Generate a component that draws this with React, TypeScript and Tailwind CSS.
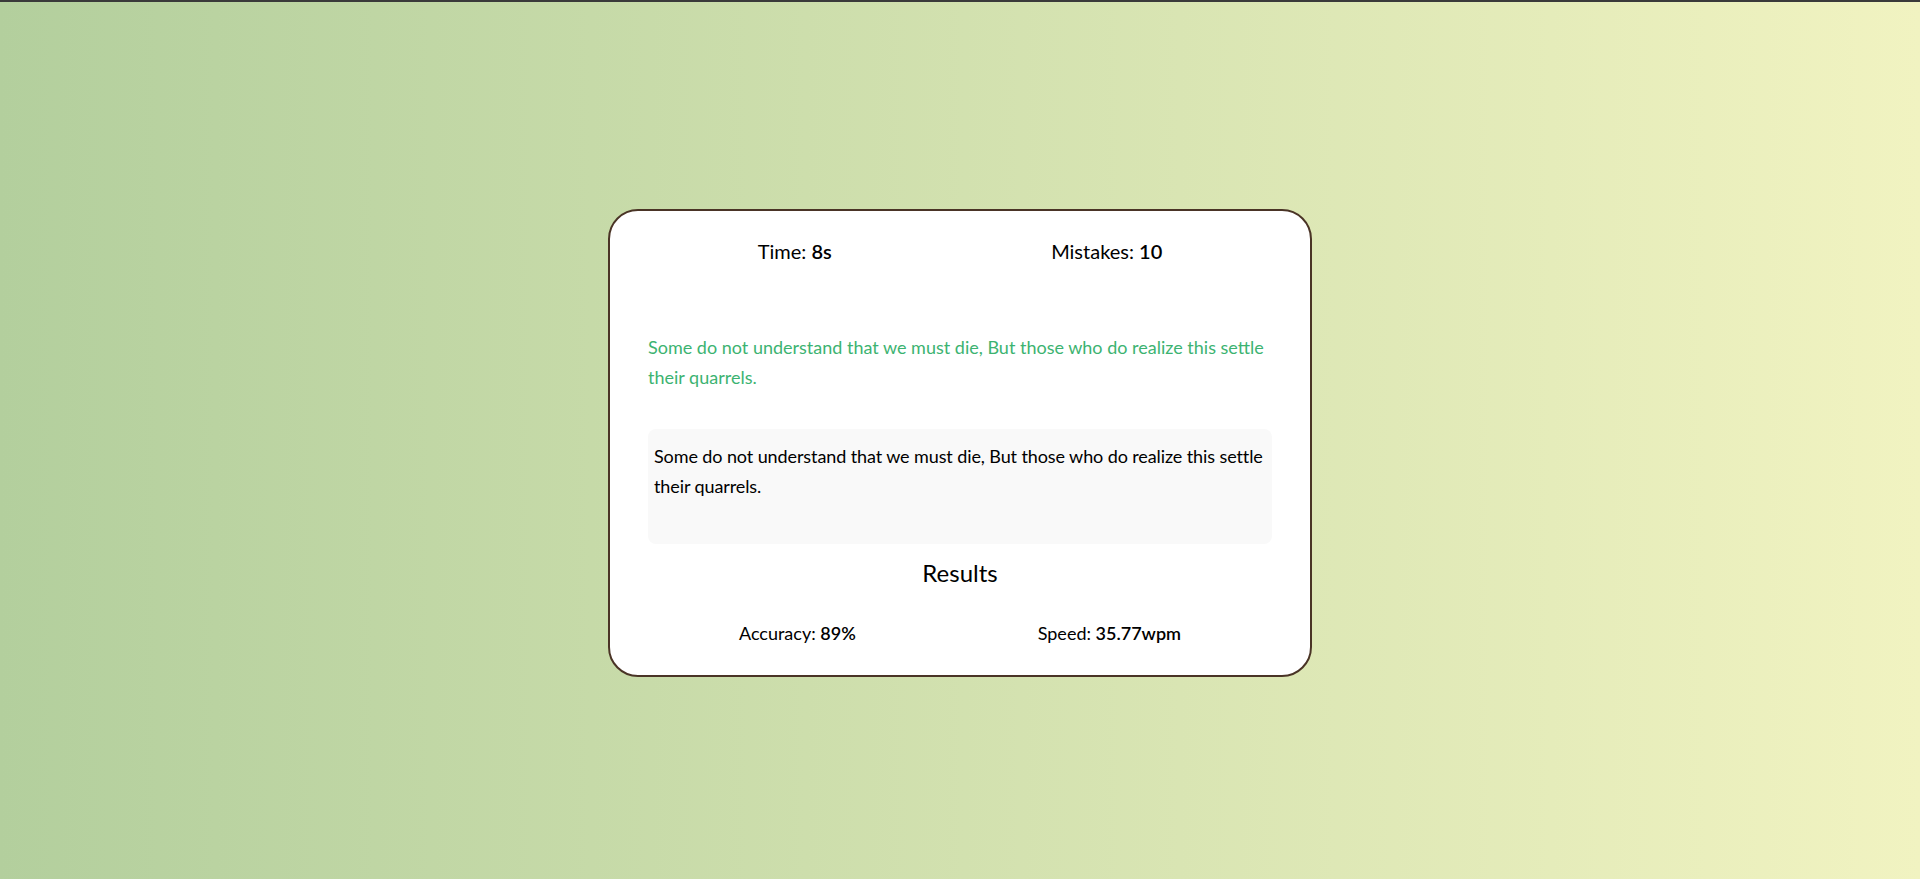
const quote = 'Some do not understand that we must die, But those who do realize this settle their quarrels.';

const Stat = ({ label, value }: { label: string; value: string }) => (
    <p>
        {label}: <span className="font-semibold">{value}</span>
    </p>
);

export default function App() {
    return (
        <div className="min-h-screen border-t-2 border-[#3a3a3a] pt-[5px] bg-gradient-to-r from-[#b3cf9d] to-[#f1f3c1] flex items-center justify-center font-['Lato',sans-serif] text-black">
            <div className="w-[704px] rounded-[30px] border-2 border-[#4a3426] bg-white px-[38px] pt-[26px] pb-[28px]">
                <div className="flex justify-around text-[20px] leading-[28px]">
                    <Stat label="Time" value="8s" />
                    <Stat label="Mistakes" value="10" />
                </div>

                <p className="mt-[67px] text-[18px] leading-[30px] text-[#3cb371]">{quote}</p>

                <div className="mt-[37px] h-[115px] rounded-lg bg-[#f9f9f9] pl-[6px] pt-[12px] text-[18px] leading-[30px] tracking-[-0.1px]">
                    {quote}
                </div>

                <h2 className="mt-[13px] text-center text-[24px] leading-[32px]">Results</h2>

                <div className="mt-[30px] flex justify-around text-[18px] leading-[28px]">
                    <Stat label="Accuracy" value="89%" />
                    <Stat label="Speed" value="35.77wpm" />
                </div>
            </div>
        </div>
    );
}
